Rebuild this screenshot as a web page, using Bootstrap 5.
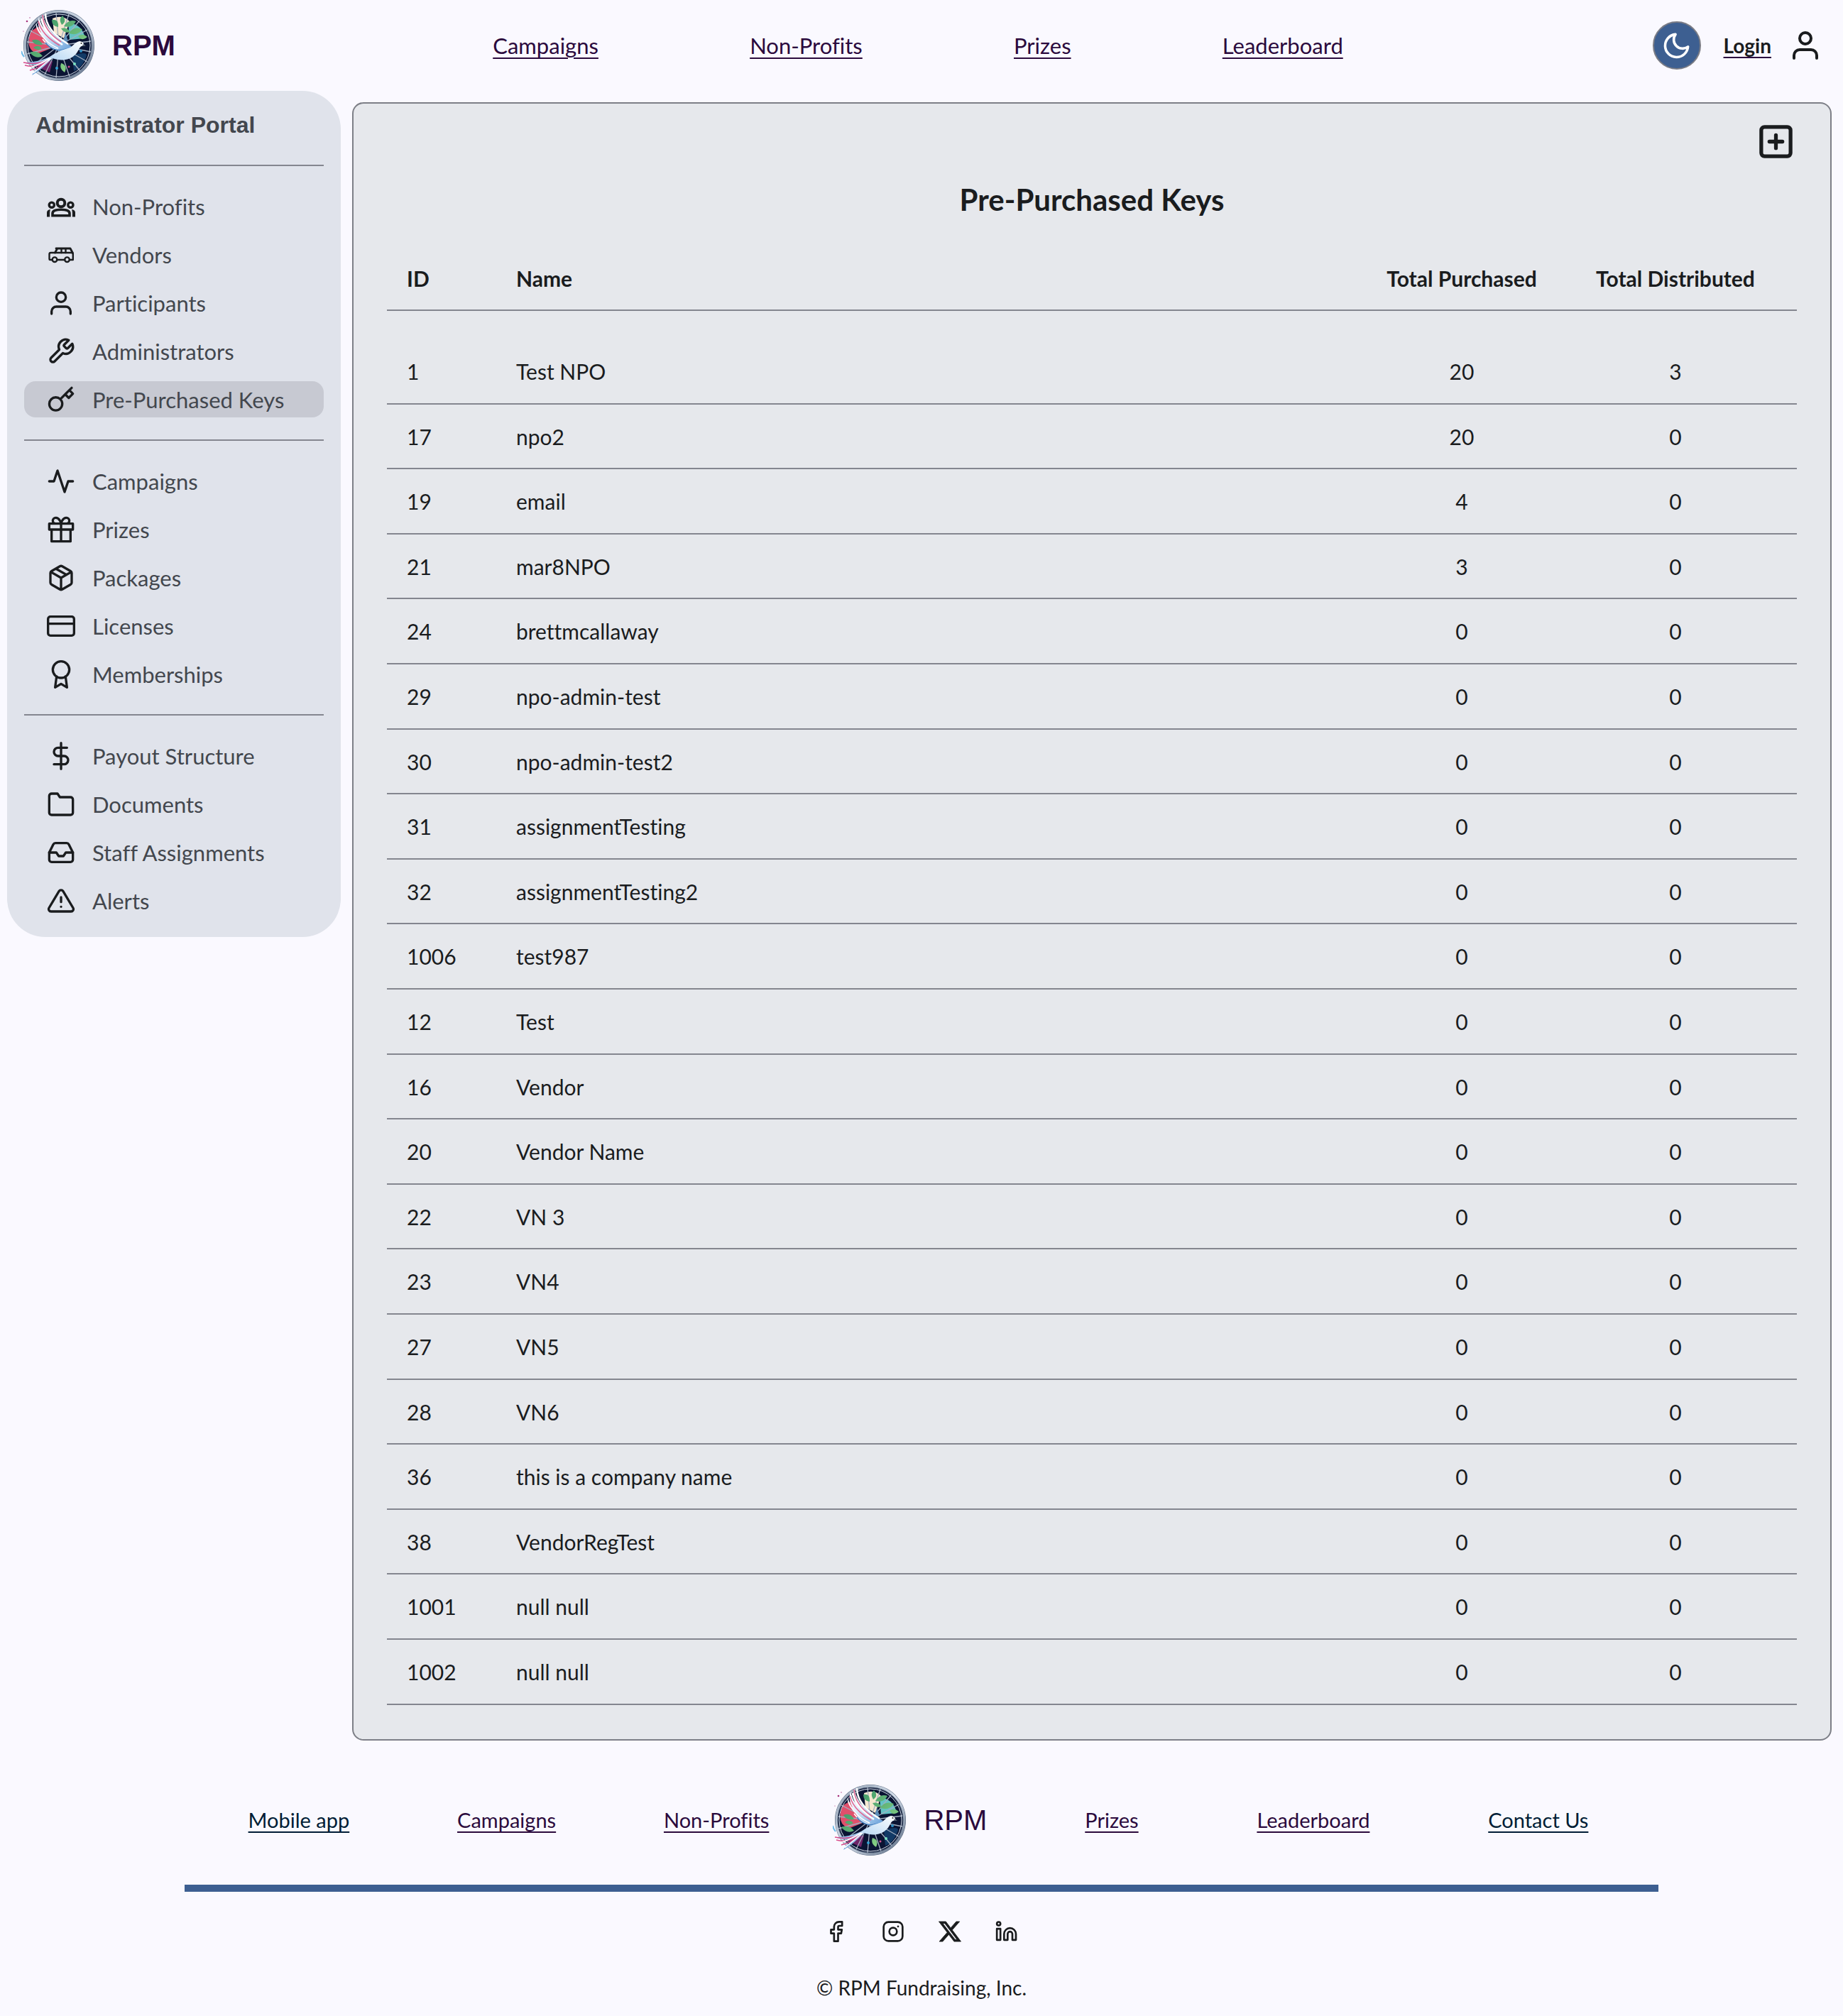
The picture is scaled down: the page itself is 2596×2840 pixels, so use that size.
<!DOCTYPE html>
<html lang="en">
<head>
<meta charset="utf-8">
<meta name="viewport" content="width=device-width, initial-scale=1">
<title>RPM - Pre-Purchased Keys</title>
<link rel="stylesheet" href="https://cdn.jsdelivr.net/npm/bootstrap@5.3.0/dist/css/bootstrap.min.css">
<style>
  body { background: #faf9ff; color: #1a1c1e; font-family: Lato, sans-serif; font-size: 30px; line-height: 40px; font-variant-ligatures: none; }
  .ic { fill: none; stroke: currentColor; stroke-width: 2; stroke-linecap: round; stroke-linejoin: round; flex: none; display: block; }
  .site-head { height: 128px; padding: 0 29px 0 19px; }
  .side-slot { flex: 1 1 0; }
  .head-links { width: 47%; }
  .brand-link { color: #2b0a3d; font-family: "Liberation Sans", Arial, sans-serif; font-size: 40px; gap: 24px; }
  .side-slot .brand-link { margin-left: 11px; }
  .brand-link svg { width: 104px; height: 104px; display: block; }
  .plum { color: #2b0a3d; text-decoration-thickness: 2px; text-underline-offset: 5px; }
  .navy { color: #001d36; text-decoration-thickness: 2px; text-underline-offset: 5px; }
  .site-head .plum { font-size: 31px; }
  .site-head .login-link { color: #1a1c1e; font-size: 28px; text-decoration-color: #2b0a3d; }
  .theme-btn { width: 68px; height: 68px; border: 2px solid #7a7c85; background: #3d5f91; color: #fff; }
  .portal { width: 470px; margin-left: 10px; padding: 24px 24px 26px; border-radius: 54px; background: #e0e3eb; color: #43474e; flex: none; }
  .portal h2 { font-family: "Liberation Sans", Arial, sans-serif; font-size: 32px; line-height: 48px; padding-left: 16px; margin: 0 0 32px; }
  .rule { height: 2px; background: #84868f; border: 0; opacity: 1; margin: 31px 0; }
  .rule-first { margin-top: 0; }
  .portal ul { display: grid; gap: 17px; }
  .portal li a { height: 51px; padding-left: 32px; gap: 24px; border-radius: 16px; color: #43474e; font-size: 31px; }
  .portal li a svg { width: 40px; height: 40px; color: #1a1c1e; }
  .portal li a.current { background: #c7c9d2; }
  .panel { margin: 16px 16px 0; padding: 26px 47px 48px; border: 2px solid #7d7f87; border-radius: 16px; background: #e6e8ec; }
  .add-btn { margin-right: 2px; color: #1a1c1e; }
  .panel h1 { font-size: 42px; line-height: 52px; margin: 28px 0 40px; font-weight: 700; }
  .keys { width: 100%; border-collapse: separate; border-spacing: 0; table-layout: fixed; }
  .keys th, .keys td { border-bottom: 2px solid #84868f; padding: 0 28px; vertical-align: middle; height: 92px; }
  .keys th { height: 91px; font-weight: 700; font-size: 30px; }
  .keys tr:nth-child(5n+2) td, .keys tr:nth-child(5n+4) td { height: 91px; }
  .keys tbody tr:first-child td { height: 132px; padding-top: 40px; }
  .keys th:nth-child(n+3), .keys td:nth-child(n+3) { text-align: center; padding-left: 8px; padding-right: 8px; }
  .c-id { width: 154px; } .c-bought { width: 260px; } .c-given { width: 342px; }
  .foot-inner { width: 80%; }
  .foot-nav { margin-top: 60px; font-size: 29px; }
  .foot-left { width: 44%; padding: 0 90px; }
  .foot-right { padding: 0 99px 0 138px; }
  .foot-bar { height: 10px; background: #3d5f91; border: 0; opacity: 1; margin: 39px 0 36px; }
  .socials { gap: 40px; }
  .socials a { color: #1a1c1e; }
  .copy { margin: 39px 0 19px; font-size: 28px; }
</style>
<script src="https://cdn.jsdelivr.net/npm/bootstrap@5.3.0/dist/js/bootstrap.bundle.min.js"></script>
</head>
<body>
<svg width="0" height="0" class="position-absolute" aria-hidden="true">
  <defs>
    <linearGradient id="wing" x1="0" y1="0" x2="1" y2="1"><stop offset="0" stop-color="#fff"/><stop offset=".4" stop-color="#e4f0fc"/><stop offset="1" stop-color="#5f9bd8"/></linearGradient>
    <linearGradient id="body" x1="0" y1="1" x2="1" y2="0"><stop offset="0" stop-color="#4e8fd0"/><stop offset=".5" stop-color="#bfdcf5"/><stop offset="1" stop-color="#fff"/></linearGradient>
    <linearGradient id="leaf" x1="0" y1="0" x2="1" y2="1"><stop offset="0" stop-color="#2d8a62"/><stop offset="1" stop-color="#9be08c"/></linearGradient>
    <linearGradient id="rim" x1="0" y1="0" x2="1" y2="1"><stop offset="0" stop-color="#8e9db0"/><stop offset=".5" stop-color="#d5dfeb"/><stop offset="1" stop-color="#54657e"/></linearGradient>
    <symbol id="dove" viewBox="0 0 104 104">
      <circle cx="53" cy="52" r="50" fill="#52627a"/>
      <circle cx="53" cy="52" r="48" fill="none" stroke="url(#rim)" stroke-width="3"/>
      <circle cx="53" cy="52" r="45.500" fill="#0a1433"/>
      <path d="M14 32Q28 20 40 30L52 52 22 64Q4 56 14 32z" fill="#e0506c"/>
      <path d="M44 14Q58 8 68 18L60 42 46 34z" fill="#f5e7d0"/>
      <path d="M66 20Q86 22 90 42L68 44z" fill="#63c3c4"/>
      <path d="M72 66Q92 60 92 66 86 84 74 88z" fill="#123a66"/>
      <path d="M22 82Q34 72 44 74L40 90z" fill="#6f2468"/>
      <g stroke="#a3afc0" stroke-width="1.300" fill="none">
        <path d="M53 52L49 6M53 52L67 8M53 52L82 17M53 52L93 30M53 52L98 46M53 52L98 61M53 52L93 75M53 52L83 88M53 52L68 96M53 52L49 98M53 52L33 93M53 52L17 80M53 52L8 64M53 52L8 47M53 52L12 31M53 52L27 14"/>
      </g>
      <circle cx="53" cy="52" r="44" fill="none" stroke="#d5dfeb" stroke-width="1"/>
      <g fill="url(#leaf)">
        <path d="M43 16q10-2 9 10-9-1-9-10zM58 10q7 8-1 13-5-8 1-13zM60 25q7-11 17-7-5 10-17 7zM67 35q6-11 19-6-6 10-19 6zM80 39q6-5 13 1-7 7-13-1zM56 28q8-2 13 5-8 3-13-5zM15 45q10-4 15 6-11 2-15-6zM12 62q11-4 18 5-10 5-18-5zM17 55q7-5 12 1-6 5-12-1zM56 77q10 3 5 13-8-5-5-13z"/>
      </g>
      <g fill="#7ae0c0"><circle cx="75" cy="78" r="2"/><circle cx="50" cy="84" r="2" fill="#35a3d6"/><circle cx="67" cy="82" r="1.500" fill="#d05090"/><circle cx="84" cy="60" r="2" fill="#2d8fc4"/></g>
      <path d="M62 34L66 46 59 48z" fill="#5c8db8"/>
      <path d="M31 8C32 26 50 42 71 53L62 60C48 62 38 54 32 42 24 34 20 28 21 20 24 30 26 33 28 34 23 26 23 18 25 12 27 20 30 26 32 28 28 20 28 14 31 8z" fill="url(#wing)"/>
      <path d="M34 7C34 24 46 38 66 50M28 14C31 30 44 42 58 51" stroke="#fff" stroke-width="2.500" fill="none"/>
      <path d="M30 9C31 26 42 38 56 47M24 18C28 34 40 44 54 52" stroke="#e2638f" stroke-width="1.500" fill="none"/>
      <path d="M22 26C28 40 38 50 52 56M30 43C38 54 46 58 58 58" stroke="#fff" stroke-width="1.500" fill="none"/>
      <path d="M34 48C42 58 50 60 64 57" stroke="#3c7cc0" stroke-width="1.500" fill="none"/>
      <path d="M89 52Q87 46 82 46C75 47 73 54 66 56C54 59 46 64 40 68 28 74 14 76 3 76 14 80 24 80 32 77 24 84 18 88 15 94 26 88 36 78 44 70 54 74 68 74 77 64 81 59 82 54 85 53z" fill="url(#body)"/>
      <path d="M3 76Q20 80 36 73M5 80Q20 84 34 76M12 87Q26 84 38 74" stroke="#d84d8b" stroke-width="1.500" fill="none"/>
      <path d="M10 84Q24 80 40 70M17 91Q28 82 42 70" stroke="#fff" stroke-width="1.500" fill="none"/>
      <path d="M0 60q1 5 4 8" stroke="#6bbbe8" stroke-width="2" fill="none"/>
      <circle cx="84.500" cy="49" r="1" fill="#222"/><path d="M87 50l4 3-5 0z" fill="#55606e"/>
      <g fill="#a6327c"><circle cx="8" cy="18" r="1.300"/><circle cx="12" cy="13" r=".7"/><circle cx="3" cy="32" r=".6"/></g>
    </symbol>
  </defs>
</svg>

<header class="site-head d-flex align-items-center">
  <div class="side-slot d-flex">
    <a href="#" class="brand-link d-flex align-items-center text-decoration-none fw-bold"><svg aria-hidden="true"><use href="#dove"/></svg>RPM</a>
  </div>
  <nav class="head-links d-flex justify-content-between" aria-label="Main">
    <a class="plum" href="#">Campaigns</a><a class="plum" href="#">Non-Profits</a><a class="plum" href="#">Prizes</a><a class="plum" href="#">Leaderboard</a>
  </nav>
  <div class="side-slot d-flex justify-content-end align-items-center">
    <button type="button" class="theme-btn btn rounded-circle p-0 d-flex align-items-center justify-content-center me-4" aria-label="Dark mode"><svg class="ic" width="43" height="43" viewBox="0 0 24 24"><path d="M21 12.790A9 9 0 1 1 11.210 3 7 7 0 0 0 21 12.790z"/></svg></button>
    <a class="plum login-link fw-bold ms-2 me-4" href="#">Login</a>
    <svg class="ic" width="48" height="48" viewBox="0 0 24 24"><path d="M20 21v-2a4 4 0 0 0-4-4H8a4 4 0 0 0-4 4v2"/><circle cx="12" cy="7" r="4"/></svg>
  </div>
</header>

<div class="d-flex align-items-start">
  <aside class="portal">
    <h2 class="fw-bold">Administrator Portal</h2>
    <hr class="rule rule-first">
    <ul class="list-unstyled m-0">
      <li><a href="#" class="d-flex align-items-center text-decoration-none"><svg viewBox="0 0 40 40" fill="none" stroke="currentColor"><circle cx="20" cy="15" r="5.300" stroke-width="4"/><circle cx="6.800" cy="17.700" r="3.600" stroke-width="3.400"/><circle cx="33.400" cy="17.700" r="3.600" stroke-width="3.400"/><path d="M8 32.800v-3q0-5.500 12-5.500t12 5.500v3z" stroke-width="3.600"/><path d="M0 34.600v-6q0-4 5-4.600-.9 2-.9 5v5.600zM40 34.600v-6q0-4-5-4.600.9 2 .9 5v5.600z" fill="currentColor" stroke="none"/></svg>Non-Profits</a></li>
      <li><a href="#" class="d-flex align-items-center text-decoration-none"><svg viewBox="0 0 40 40" fill="none" stroke="currentColor" stroke-width="2.400" stroke-linejoin="round" stroke-linecap="round"><path d="M7 27H4.500a1 1 0 0 1-1-1v-7q0-2 2-2h29.500q1.800 0 1.800 2v8H32M15 27h10"/><path d="M13 11h20l3.500 6.500M14.500 11.500l-3 5.500" stroke-width="2.800"/><path d="M20.500 12v5M26.500 12v5"/><circle cx="11" cy="26.700" r="3.300"/><circle cx="28.500" cy="26.700" r="3.300"/></svg>Vendors</a></li>
      <li><a href="#" class="d-flex align-items-center text-decoration-none"><svg class="ic" viewBox="0 0 24 24"><path d="M20 21v-2a4 4 0 0 0-4-4H8a4 4 0 0 0-4 4v2"/><circle cx="12" cy="7" r="4"/></svg>Participants</a></li>
      <li><a href="#" class="d-flex align-items-center text-decoration-none"><svg class="ic" viewBox="0 0 24 24"><path d="M14.700 6.300a1 1 0 0 0 0 1.400l1.600 1.600a1 1 0 0 0 1.400 0l3.770-3.770a6 6 0 0 1-7.940 7.940l-6.910 6.910a2.120 2.120 0 0 1-3-3l6.910-6.910a6 6 0 0 1 7.940-7.940l-3.760 3.760z"/></svg>Administrators</a></li>
      <li><a href="#" class="current d-flex align-items-center text-decoration-none" aria-current="page"><svg class="ic" viewBox="0 0 24 24"><path d="M21 2l-2 2m-7.610 7.610a5.500 5.500 0 1 1-7.778 7.778 5.500 5.500 0 0 1 7.777-7.777zm0 0L15.500 7.500m0 0l3 3L22 7l-3-3m-3.500 3.500L19 4"/></svg>Pre-Purchased Keys</a></li>
    </ul>
    <hr class="rule">
    <ul class="list-unstyled m-0">
      <li><a href="#" class="d-flex align-items-center text-decoration-none"><svg class="ic" viewBox="0 0 24 24"><path d="M22 12h-4l-3 9L9 3l-3 9H2"/></svg>Campaigns</a></li>
      <li><a href="#" class="d-flex align-items-center text-decoration-none"><svg class="ic" viewBox="0 0 24 24"><path d="M20 12v10H4V12M2 7h20v5H2zM12 22V7M12 7H7.500a2.500 2.500 0 0 1 0-5C11 2 12 7 12 7zM12 7h4.500a2.500 2.500 0 0 0 0-5C13 2 12 7 12 7z"/></svg>Prizes</a></li>
      <li><a href="#" class="d-flex align-items-center text-decoration-none"><svg class="ic" viewBox="0 0 24 24"><path d="M16.500 9.400l-9-5.190M21 16V8a2 2 0 0 0-1-1.730l-7-4a2 2 0 0 0-2 0l-7 4A2 2 0 0 0 3 8v8a2 2 0 0 0 1 1.730l7 4a2 2 0 0 0 2 0l7-4A2 2 0 0 0 21 16zM3.270 6.960L12 12.010l8.730-5.050M12 22.080V12"/></svg>Packages</a></li>
      <li><a href="#" class="d-flex align-items-center text-decoration-none"><svg class="ic" viewBox="0 0 24 24"><rect x="1" y="4" width="22" height="16" rx="2"/><path d="M1 10h22"/></svg>Licenses</a></li>
      <li><a href="#" class="d-flex align-items-center text-decoration-none"><svg class="ic" viewBox="0 0 24 24"><circle cx="12" cy="8" r="7"/><path d="M8.210 13.890L7 23l5-3 5 3-1.210-9.120"/></svg>Memberships</a></li>
    </ul>
    <hr class="rule">
    <ul class="list-unstyled m-0">
      <li><a href="#" class="d-flex align-items-center text-decoration-none"><svg class="ic" viewBox="0 0 24 24"><path d="M12 1v22M17 5H9.500a3.500 3.500 0 0 0 0 7h5a3.500 3.500 0 0 1 0 7H6"/></svg>Payout Structure</a></li>
      <li><a href="#" class="d-flex align-items-center text-decoration-none"><svg class="ic" viewBox="0 0 24 24"><path d="M22 19a2 2 0 0 1-2 2H4a2 2 0 0 1-2-2V5a2 2 0 0 1 2-2h5l2 3h9a2 2 0 0 1 2 2z"/></svg>Documents</a></li>
      <li><a href="#" class="d-flex align-items-center text-decoration-none"><svg class="ic" viewBox="0 0 24 24"><path d="M22 12h-6l-2 3h-4l-2-3H2"/><path d="M5.450 5.110L2 12v6a2 2 0 0 0 2 2h16a2 2 0 0 0 2-2v-6l-3.450-6.890A2 2 0 0 0 16.760 4H7.240a2 2 0 0 0-1.790 1.110z"/></svg>Staff Assignments</a></li>
      <li><a href="#" class="d-flex align-items-center text-decoration-none"><svg class="ic" viewBox="0 0 24 24"><path d="M10.290 3.860L1.820 18a2 2 0 0 0 1.710 3h16.940a2 2 0 0 0 1.710-3L13.710 3.860a2 2 0 0 0-3.420 0zM12 9v4M12 17h.01"/></svg>Alerts</a></li>
    </ul>
  </aside>

  <main class="panel flex-fill">
    <div class="d-flex justify-content-end">
      <button type="button" class="add-btn btn p-0 border-0" aria-label="Add keys"><svg class="ic" width="55" height="55" viewBox="0 0 24 24"><g stroke-width="2.300"><rect x="3" y="3" width="18" height="18" rx="2"/><path d="M12 8v8M8 12h8"/></g></svg></button>
    </div>
    <h1 class="text-center">Pre-Purchased Keys</h1>
    <table class="keys">
      <colgroup><col class="c-id"><col><col class="c-bought"><col class="c-given"></colgroup>
      <thead><tr><th scope="col">ID</th><th scope="col">Name</th><th scope="col">Total Purchased</th><th scope="col">Total Distributed</th></tr></thead>
      <tbody>
        <tr><td>1</td><td>Test NPO</td><td>20</td><td>3</td></tr>
        <tr><td>17</td><td>npo2</td><td>20</td><td>0</td></tr>
        <tr><td>19</td><td>email</td><td>4</td><td>0</td></tr>
        <tr><td>21</td><td>mar8NPO</td><td>3</td><td>0</td></tr>
        <tr><td>24</td><td>brettmcallaway</td><td>0</td><td>0</td></tr>
        <tr><td>29</td><td>npo-admin-test</td><td>0</td><td>0</td></tr>
        <tr><td>30</td><td>npo-admin-test2</td><td>0</td><td>0</td></tr>
        <tr><td>31</td><td>assignmentTesting</td><td>0</td><td>0</td></tr>
        <tr><td>32</td><td>assignmentTesting2</td><td>0</td><td>0</td></tr>
        <tr><td>1006</td><td>test987</td><td>0</td><td>0</td></tr>
        <tr><td>12</td><td>Test</td><td>0</td><td>0</td></tr>
        <tr><td>16</td><td>Vendor</td><td>0</td><td>0</td></tr>
        <tr><td>20</td><td>Vendor Name</td><td>0</td><td>0</td></tr>
        <tr><td>22</td><td>VN 3</td><td>0</td><td>0</td></tr>
        <tr><td>23</td><td>VN4</td><td>0</td><td>0</td></tr>
        <tr><td>27</td><td>VN5</td><td>0</td><td>0</td></tr>
        <tr><td>28</td><td>VN6</td><td>0</td><td>0</td></tr>
        <tr><td>36</td><td>this is a company name</td><td>0</td><td>0</td></tr>
        <tr><td>38</td><td>VendorRegTest</td><td>0</td><td>0</td></tr>
        <tr><td>1001</td><td>null null</td><td>0</td><td>0</td></tr>
        <tr><td>1002</td><td>null null</td><td>0</td><td>0</td></tr>
      </tbody>
    </table>
  </main>
</div>

<footer>
  <div class="foot-inner mx-auto">
    <nav class="foot-nav d-flex align-items-center" aria-label="Footer">
      <div class="foot-left d-flex flex-shrink-0 justify-content-between"><a class="navy" href="#">Mobile app</a><a class="plum" href="#">Campaigns</a><a class="plum" href="#">Non-Profits</a></div>
      <a href="#" class="brand-link d-flex align-items-center text-decoration-none"><svg aria-hidden="true"><use href="#dove"/></svg>RPM</a>
      <div class="foot-right d-flex flex-fill justify-content-between"><a class="plum" href="#">Prizes</a><a class="plum" href="#">Leaderboard</a><a class="navy" href="#">Contact Us</a></div>
    </nav>
    <hr class="foot-bar">
    <div class="socials d-flex justify-content-center">
      <a href="#" aria-label="Facebook"><svg class="ic" width="40" height="40" viewBox="0 0 24 24"><g stroke-width="1.600"><path d="M7.500 10.400v3.200h2.600v6.600h3.400v-6.600h2.600l.6-3.200h-3.200V8.200a1 1 0 0 1 1-1h2.400V3.800h-2.600a4.200 4.200 0 0 0-4.200 4.200v2.400z"/></g></svg></a>
      <a href="#" aria-label="Instagram"><svg class="ic" width="40" height="40" viewBox="0 0 24 24"><g stroke-width="1.600"><rect x="4" y="4" width="16" height="16" rx="4"/><circle cx="12" cy="12" r="3.200"/><path d="M16.200 7.700v.1"/></g></svg></a>
      <a href="#" aria-label="X"><svg class="d-block" width="40" height="40" viewBox="-2.300 -2 20.600 20" fill="currentColor" stroke="currentColor" stroke-width=".4"><path d="M12.600.75h2.454l-5.360 6.142L16 15.250h-4.937l-3.867-5.070-4.425 5.070H.316l5.733-6.570L0 .75h5.063l3.495 4.633L12.601.75Zm-.86 13.028h1.360L4.323 2.145H2.865z"/></svg></a>
      <a href="#" aria-label="LinkedIn"><svg class="ic" width="40" height="40" viewBox="0 0 24 24"><g stroke-width="1.600"><circle cx="5.200" cy="5.400" r="1.500"/><path d="M3.700 9.700h3v9.400h-3zM9.800 19.100v-5a5 5 0 0 1 10 0v5h-3v-5a2 2 0 0 0-4 0v5z"/></g></svg></a>
    </div>
    <p class="copy text-center">© RPM Fundraising, Inc.</p>
  </div>
</footer>
</body>
</html>
